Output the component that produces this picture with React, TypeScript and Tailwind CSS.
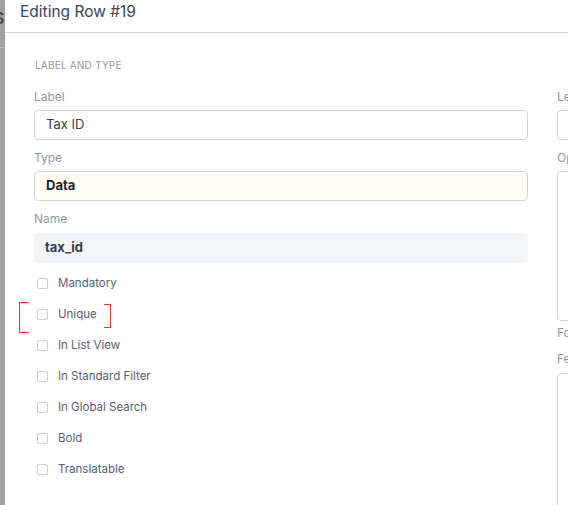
import React from "react";

const font = { fontFamily: "Inter, 'Noto Sans', sans-serif" };

function Label({ children }: { children: React.ReactNode }) {
  return <div className="text-[12px] leading-[16px] text-[#8d99a6]">{children}</div>;
}

function Check({ label }: { label: string }) {
  return (
    <div className="flex h-[31px] items-center">
      <div className="ml-[3px] h-[11px] w-[11px] rounded-[2px] border border-[#c8ced3] bg-white" />
      <span className="ml-[10px] text-[11.5px] text-[#56626e]">{label}</span>
    </div>
  );
}

export default function App() {
  const checks = ["Mandatory", "Unique", "In List View", "In Standard Filter", "In Global Search", "Bold", "Translatable"];
  return (
    <div className="relative flex h-[505px] w-[568px] overflow-hidden bg-[#9da2a2]" style={font}>
      <div className="relative w-[5px] shrink-0 overflow-hidden">
        <span className="absolute left-[-6px] top-[6px] text-[16px] font-semibold text-[#444]">S</span>
        <div className="absolute left-0 top-[47px] h-px w-[5px] bg-[#b4b8b8]" />
      </div>
      <div className="flex w-[900px] shrink-0 flex-col bg-white">
        <div className="flex h-[33px] shrink-0 items-start border-b border-[#d1d8dd] pl-[15px]">
          <span className="mt-[1px] text-[15.5px] leading-[22px] text-[#3b4651]">Editing Row #19</span>
        </div>
        <div className="flex pl-[29px] pt-[24px]">
          <div className="flex w-[494px] shrink-0 flex-col">
            <div className="pl-[1px] text-[10px] leading-[16px] tracking-[0.2px] text-[#8d99a6]">LABEL AND TYPE</div>
            <div className="mt-[16px]">
              <Label>Label</Label>
              <div className="mt-[5px] flex h-[30px] items-center rounded-[4px] border border-[#d1d8dd] px-[11px] text-[13px] text-[#36414c]">Tax ID</div>
            </div>
            <div className="mt-[10px]">
              <Label>Type</Label>
              <div className="mt-[5px] flex h-[30px] items-center rounded-[4px] border border-[#d1d8dd] bg-[#fffdf4] px-[11px] text-[13px] font-bold text-[#1f272e]">Data</div>
            </div>
            <div className="mt-[10px]">
              <Label>Name</Label>
              <div className="mt-[6px] flex h-[30px] items-center rounded-[4px] bg-[#f4f5f6] px-[11px] text-[13px] font-bold text-[#36414c]">tax_id</div>
            </div>
            <div className="mt-[5px] flex flex-col">
              {checks.map((c) => (
                <Check key={c} label={c} />
              ))}
            </div>
          </div>
          <div className="ml-[29px] flex w-[300px] shrink-0 flex-col pt-[32px]">
            <Label>Length</Label>
            <div className="mt-[5px] h-[30px] rounded-[4px] border border-[#d1d8dd]" />
            <div className="mt-[10px]">
              <Label>Options</Label>
              <div className="mt-[5px] h-[150px] rounded-[4px] border border-[#d1d8dd]" />
            </div>
            <div className="mt-[4px]">
              <Label>Format</Label>
            </div>
            <div className="mt-[10px]">
              <Label>Fetch From</Label>
              <div className="mt-[6px] h-[200px] rounded-[4px] border border-[#d1d8dd]" />
            </div>
          </div>
        </div>
      </div>
      <div className="absolute left-[19px] top-[302px] h-[31px] w-[10px] border-y border-l border-[#e53935]" />
      <div className="absolute left-[104px] top-[304px] h-[24px] w-[7px] border-y border-r border-[#e53935]" />
    </div>
  );
}
